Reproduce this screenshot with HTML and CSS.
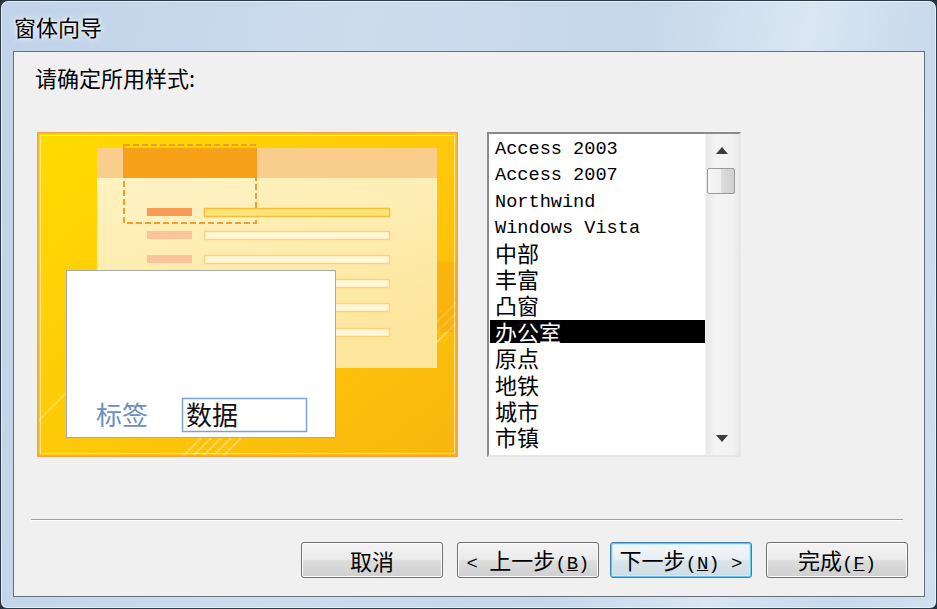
FILE: index.html
```
<!DOCTYPE html>
<html lang="zh-CN">
<head>
    <meta charset="utf-8">
    <title>窗体向导</title>
    <link rel="stylesheet" href="styles.css">
</head>
<body>
    <div class="window">
        <div class="titlebar">窗体向导</div>
        <div class="client">
            <div class="prompt">请确定所用样式:</div>
            <div class="content">
                <div class="preview">
                    <svg width="421" height="325" viewBox="0 0 421 325">
                        <defs>
                            <linearGradient id="bg" x1="0" y1="0" x2="1" y2="1">
                                <stop offset="0" stop-color="#ffdb00"/>
                                <stop offset="0.55" stop-color="#fdc70a"/>
                                <stop offset="1" stop-color="#f9b60e"/>
                            </linearGradient>
                            <linearGradient id="panel" x1="0" y1="0" x2="0.3" y2="1">
                                <stop offset="0" stop-color="#fff6d2"/>
                                <stop offset="1" stop-color="#fde9a6"/>
                            </linearGradient>
                            <clipPath id="inside">
                                <rect x="2" y="2" width="417" height="321"/>
                            </clipPath>
                        </defs>
                        <rect x="0" y="0" width="421" height="325" fill="url(#bg)"/>
                        <g clip-path="url(#inside)" stroke="#fff" stroke-opacity="0.35" stroke-width="2">
                            <line x1="140" y1="330" x2="175" y2="295"/>
                            <line x1="150" y1="330" x2="185" y2="295"/>
                            <line x1="160" y1="330" x2="195" y2="295"/>
                            <line x1="170" y1="330" x2="205" y2="295"/>
                            <line x1="180" y1="330" x2="215" y2="295"/>
                            <line x1="400" y1="210" x2="425" y2="185"/>
                            <line x1="400" y1="200" x2="425" y2="175"/>
                            <line x1="400" y1="190" x2="425" y2="165"/>
                            <line x1="0" y1="290" x2="70" y2="220" stroke-opacity="0.25"/>
                        </g>
                        <rect x="400" y="130" width="21" height="70" fill="#f7a80c" opacity="0.5"/>
                        <rect x="60" y="16" width="340" height="220" fill="url(#panel)" opacity="0.94"/>
                        <rect x="60" y="16" width="340" height="30" fill="#f9cd8c"/>
                        <rect x="86" y="16" width="134" height="30" fill="#f6a117"/>
                        <rect x="87" y="46" width="132" height="45" fill="#fff3c8" fill-opacity="0.4"/>
                        <rect x="87" y="13" width="132" height="78" fill="none" stroke="#f39c2c" stroke-width="2" stroke-dasharray="6 3"/>
                        <g>
                            <rect x="110" y="76" width="45" height="8" fill="#f99b52"/>
                            <rect x="167.5" y="76.5" width="185" height="8" fill="#ffe47a" stroke="#f8be38" stroke-width="1.5"/>
                            <rect x="110" y="99" width="45" height="8" fill="#fcc49c"/>
                            <rect x="167.5" y="99.5" width="185" height="8" fill="#fff7d8" stroke="#fcd27c" stroke-width="1.5"/>
                            <rect x="110" y="123" width="45" height="8" fill="#fcc49c"/>
                            <rect x="167.5" y="123.5" width="185" height="8" fill="#fff7d8" stroke="#fcd27c" stroke-width="1.5"/>
                            <rect x="110" y="147" width="45" height="8" fill="#fcc49c"/>
                            <rect x="167.5" y="147.5" width="185" height="8" fill="#fff7d8" stroke="#fcd27c" stroke-width="1.5"/>
                            <rect x="110" y="171" width="45" height="8" fill="#fcc49c"/>
                            <rect x="167.5" y="171.5" width="185" height="8" fill="#fff7d8" stroke="#fcd27c" stroke-width="1.5"/>
                            <rect x="110" y="196" width="45" height="8" fill="#fcc49c"/>
                            <rect x="167.5" y="196.5" width="185" height="8" fill="#fff7d8" stroke="#fcd27c" stroke-width="1.5"/>
                        </g>
                        <rect x="29.5" y="138.5" width="269" height="167" fill="#fff" stroke="#a9a9a9"/>
                        <text x="59" y="293" class="label-text">标签</text>
                        <rect x="145.5" y="266.5" width="124" height="33" fill="#fff" stroke="#7ea3d3" stroke-width="1.5"/>
                        <text x="149" y="293" class="data-text">数据</text>
                        <rect x="0.75" y="0.75" width="419.5" height="323.5" fill="none" stroke="#f3a048" stroke-width="1.5"/>
                        <rect x="3.5" y="3.5" width="414" height="318" fill="none" stroke="#fff" stroke-opacity="0.55"/>
                    </svg>
                </div>
                <div class="listbox">
                    <ul class="items">
                        <li class="en">Access 2003</li>
                        <li class="en">Access 2007</li>
                        <li class="en">Northwind</li>
                        <li class="en">Windows Vista</li>
                        <li>中部</li>
                        <li>丰富</li>
                        <li>凸窗</li>
                        <li class="selected">办公室</li>
                        <li>原点</li>
                        <li>地铁</li>
                        <li>城市</li>
                        <li>市镇</li>
                    </ul>
                    <div class="scrollbar">
                        <div class="arrow">
                            <svg width="12" height="7" viewBox="0 0 12 7"><path d="M6 0 L12 7 L0 7 Z" fill="#3c3c3c"/></svg>
                        </div>
                        <div class="thumb"></div>
                        <div class="track"></div>
                        <div class="arrow">
                            <svg width="12" height="7" viewBox="0 0 12 7"><path d="M0 0 L12 0 L6 7 Z" fill="#3c3c3c"/></svg>
                        </div>
                    </div>
                </div>
            </div>
            <div class="separator"></div>
            <div class="buttons">
                <button class="btn">取消</button>
                <button class="btn"><span class="lat">&lt; </span>上一步<span class="lat">(<u>B</u>)</span></button>
                <button class="btn default">下一步<span class="lat">(<u>N</u>) &gt;</span></button>
                <button class="btn">完成<span class="lat">(<u>F</u>)</span></button>
            </div>
        </div>
    </div>
</body>
</html>
```
FILE: styles.css
```
body {
    margin: 0;
    background-color: #26323e;
    font-family: "Noto Sans CJK SC", "Liberation Sans", sans-serif;
}
.window {
    box-sizing: border-box;
    width: 937px;
    height: 609px;
    border: 1px solid #2e3b48;
    border-radius: 8px 8px 7px 7px;
    padding: 0 11px 11px 12px;
    display: flex;
    flex-direction: column;
    background: linear-gradient(100deg, #c0d3e9 0%, #cddced 35%, #c6d7ea 62%, #dae6f2 78%, #c8d9ec 90%, #d2e0ef 100%);
    box-shadow: inset 0 0 0 1px rgba(255, 255, 255, 0.55);
}
.titlebar {
    height: 50px;
    line-height: 50px;
    padding-left: 1px;
    font-size: 22px;
    color: #000;
    text-shadow: 0 0 8px rgba(255, 255, 255, 0.9), 0 0 3px rgba(255, 255, 255, 0.9);
}
.client {
    flex: 1;
    display: flex;
    flex-direction: column;
    background-color: #f0f0f0;
    border: 1px solid #65707c;
}
.prompt {
    margin: 12px 0 0 21px;
    font-size: 22px;
    line-height: 26px;
    color: #000;
}
.content {
    display: flex;
    gap: 29px;
    margin-top: 42px;
    padding-left: 23px;
}
.preview {
    width: 421px;
    height: 325px;
}
.preview svg {
    display: block;
}
.label-text {
    font-family: "Noto Sans CJK SC", sans-serif;
    font-size: 26px;
    fill: #6a8fc3;
}
.data-text {
    font-family: "Noto Sans CJK SC", sans-serif;
    font-size: 26px;
    fill: #111;
}
.listbox {
    box-sizing: border-box;
    width: 254px;
    height: 325px;
    display: flex;
    background-color: #fff;
    border: 2px solid;
    border-color: #8a8a8a #e6e6e6 #e6e6e6 #8a8a8a;
}
.items {
    flex: 1;
    margin: 0;
    padding: 1px 0 0 1px;
    list-style: none;
    overflow: hidden;
}
.items li {
    box-sizing: border-box;
    height: 26.4px;
    line-height: 22.4px;
    padding-left: 5px;
    font-size: 22px;
    color: #000;
    white-space: nowrap;
}
.items li.en {
    padding-top: 2px;
    line-height: 26.4px;
    font-family: "Liberation Mono", monospace;
    font-size: 18.6px;
}
.items li.selected {
    background: linear-gradient(#000, #000) 0 -1px / 100% 24px no-repeat;
    color: #fff;
}
.scrollbar {
    width: 33px;
    display: flex;
    flex-direction: column;
    background: linear-gradient(90deg, #e8e8e8, #f4f4f4 30%, #f2f2f2 80%, #e9e9e9);
    border-left: 1px solid #f6f6f6;
}
.arrow {
    height: 33px;
    display: flex;
    align-items: center;
    justify-content: center;
    padding-right: 2px;
}
.thumb {
    height: 24px;
    margin: 1px 4px 0 1px;
    border: 1px solid #9a9a9a;
    border-radius: 2px;
    background: linear-gradient(90deg, #f7f7f7 0%, #efefef 48%, #dcdcdc 52%, #cfcfcf 100%);
}
.track {
    flex: 1;
}
.separator {
    margin: 62px 21px 0 17px;
    border-top: 1px solid #a0a0a0;
    border-bottom: 1px solid #fff;
}
.buttons {
    display: flex;
    justify-content: flex-end;
    gap: 14px;
    margin-top: 21px;
    padding-right: 16px;
}
.btn {
    box-sizing: border-box;
    width: 142px;
    height: 36px;
    padding: 0;
    border: 1px solid #707070;
    border-radius: 3px;
    background: linear-gradient(#f3f3f3 0%, #ebebeb 48%, #dddddd 52%, #cfcfcf 100%);
    box-shadow: inset 0 0 0 1px #fbfbfb;
    font-family: "Noto Sans CJK SC", sans-serif;
    font-size: 22px;
    line-height: 32px;
    color: #000;
}
.btn.default {
    margin-left: -3px;
    border-color: #3c7fb1;
    box-shadow: inset 0 0 0 1px #62c8f2, inset 0 0 0 2px #c9ecfb;
    background: linear-gradient(#f2f7fa 0%, #e8eff3 48%, #dae4ea 52%, #cfdbe2 100%);
}
.lat {
    font-family: "Liberation Mono", monospace;
    font-size: 19px;
}
```
